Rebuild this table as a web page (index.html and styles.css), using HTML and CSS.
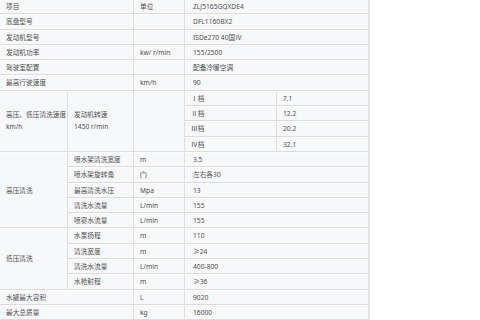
FILE: index.html
```html
<!DOCTYPE html>
<html lang="zh-CN">
<head>
  <meta charset="UTF-8" />
  <title>参数表</title>
  <link rel="stylesheet" href="styles.css">
</head>
<body>

<table class="spec">
  <colgroup>
    <col class="c1"><col class="c2"><col class="c3"><col class="c4"><col class="c5">
  </colgroup>
  <tr><td colspan="2">项目</td><td>单位</td><td colspan="2" class="val">ZLJ5165GQXDE4</td></tr>
  <tr><td colspan="2">底盘型号</td><td></td><td colspan="2" class="val">DFL1160BX2</td></tr>
  <tr><td colspan="2">发动机型号</td><td></td><td colspan="2" class="val">ISDe270 40国Ⅳ</td></tr>
  <tr><td colspan="2">发动机功率</td><td>kw/ r/min</td><td colspan="2" class="val">155/2500</td></tr>
  <tr><td colspan="2">驾驶室配置</td><td></td><td colspan="2" class="val">配备冷暖空调</td></tr>
  <tr><td colspan="2">最高行驶速度</td><td>km/h</td><td colspan="2" class="val">90</td></tr>
  <tr>
    <td rowspan="4" class="multi">高压、低压清洗速度<br>km/h</td>
    <td rowspan="4" class="multi">发动机转速<br>1450 r/min</td>
    <td rowspan="4"></td>
    <td class="gear">Ⅰ档</td><td>7.1</td>
  </tr>
  <tr><td class="gear">Ⅱ档</td><td>12.2</td></tr>
  <tr><td class="gear">Ⅲ档</td><td>20.2</td></tr>
  <tr><td class="gear">Ⅳ档</td><td>32.1</td></tr>
  <tr><td rowspan="5">高压清洗</td><td>喷水架清洗宽度</td><td>m</td><td colspan="2" class="val">3.5</td></tr>
  <tr><td>喷水架旋转角</td><td>(°)</td><td colspan="2" class="val">左右各30</td></tr>
  <tr><td>最高清洗水压</td><td>Mpa</td><td colspan="2" class="val">13</td></tr>
  <tr><td>清洗水流量</td><td>L/min</td><td colspan="2" class="val">155</td></tr>
  <tr><td>喷雾水流量</td><td>L/min</td><td colspan="2" class="val">155</td></tr>
  <tr><td rowspan="4">低压清洗</td><td>水泵扬程</td><td>m</td><td colspan="2" class="val">110</td></tr>
  <tr><td>清洗宽度</td><td>m</td><td colspan="2" class="val">≥24</td></tr>
  <tr><td>清洗水流量</td><td>L/min</td><td colspan="2" class="val">400-800</td></tr>
  <tr><td>水枪射程</td><td>m</td><td colspan="2" class="val">≥36</td></tr>
  <tr><td colspan="2">水罐最大容积</td><td>L</td><td colspan="2" class="val">9020</td></tr>
  <tr><td colspan="2">最大总质量</td><td>kg</td><td colspan="2" class="val">16000</td></tr>
</table>

</body>
</html>
```

FILE: styles.css
```css
body {
  margin: 0;
  background: #fff;
  font-family: "Noto Sans", "Noto Sans CJK SC", sans-serif;
  font-size: 6.7px;
  color: #505050;
}
.spec {
  table-layout: fixed;
  width: 371px;
  margin: -1px 0 0 -1px;
  border-collapse: separate;
  border-spacing: 0;
  border-right: 2px solid #e2e2e2;
  background: #f7f8fa;
}
.c1 { width: 68px; }
.c2 { width: 66px; }
.c3 { width: 51px; }
.c4 { width: 92px; }
.c5 { width: 92px; }
.spec td {
  height: 13.3px;
  line-height: 13.3px;
  padding: 0 0 0 6px;
  border-top: 1px solid #fcfcfd;
  border-bottom: 1px solid #dcdcdc;
  border-left: 1px solid #e0e0e0;
  vertical-align: middle;
  white-space: nowrap;
  overflow: hidden;
}
.spec .val {
  padding-left: 8px;
}
.spec .gear {
  padding-left: 6px;
  font-family: "Noto Sans CJK SC", sans-serif;
}
.spec .multi {
  line-height: 12px;
}
```
